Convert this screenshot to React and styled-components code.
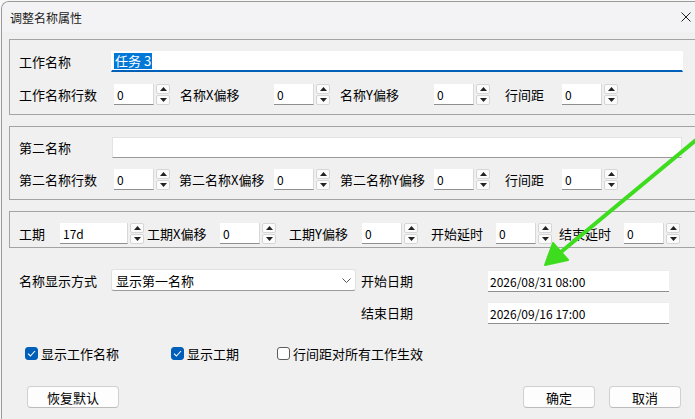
import React from 'react'
import styled, { createGlobalStyle } from 'styled-components'

const GlobalStyle = createGlobalStyle`
  html, body {
    margin: 0;
    padding: 0;
    background: #f7f7f7;
  }
  body {
    font-family: "Noto Sans CJK SC", "Noto Sans", sans-serif;
    color: #000;
  }
`

const Screen = styled.div`
  position: relative;
  width: 695px;
  height: 419px;
  overflow: hidden;
  padding-top: 1px;
  box-sizing: border-box;
`

const Window = styled.div`
  width: 720px;
  height: 440px;
  margin-left: 1px;
  border-left: 1px solid #9a9a9a;
  border-top: 1px solid #9a9a9a;
  border-top-left-radius: 8px;
  overflow: hidden;
  background: #f0f0f0;
`

const TitleBar = styled.div`
  height: 30px;
  display: flex;
  align-items: center;
  justify-content: space-between;
  padding: 0 0 0 8px;
  width: 686px;
  background: #f3f3f5;
  font-size: 12px;
  color: #1b1b1b;
`

const CloseBtn = styled.div`
  width: 20px;
  height: 20px;
  display: flex;
  align-items: center;
  justify-content: center;
`

const Body = styled.div`
  padding: 7px 0 0 7px;
  display: flex;
  flex-direction: column;
`

const Group = styled.div`
  width: 682px;
  border: 1px solid #a3a3a3;
  padding: ${p => p.$pad};
  display: flex;
  flex-direction: column;
  gap: ${p => p.$gap || 0}px;
  margin-bottom: 11px;
`

const Row = styled.div`
  display: flex;
  align-items: center;
  height: 21px;
`

const Label = styled.span`
  flex-shrink: 0;
  width: ${p => p.$w}px;
  padding-left: ${p => p.$pl || 0}px;
  box-sizing: border-box;
  font-size: 13px;
  white-space: nowrap;
  line-height: 21px;
`

const NameInput = styled.div`
  width: ${p => p.$w}px;
  height: 21px;
  box-sizing: border-box;
  background: #fff;
  border: 1px solid ${p => (p.$focused ? '#fff' : '#e3e3e3')};
  border-bottom: ${p => (p.$focused ? '2px solid #005fb8' : '1px solid #9a9a9a')};
  padding-left: 2px;
  font-size: 13px;
  line-height: 18px;
  display: flex;
  align-items: center;
`

const Selected = styled.span`
  background: #0078d7;
  color: #fff;
  padding: 0 1px;
  line-height: 16px;
`

const SpinWrap = styled.div`
  display: flex;
  align-items: center;
  flex-shrink: 0;
`

const SpinInput = styled.div`
  width: ${p => p.$w}px;
  height: 21px;
  box-sizing: border-box;
  background: #fff;
  border-right: 1px solid #d8d8d8;
  border-bottom: 1px solid #8f8f8f;
  padding-left: 3px;
  font-size: 12px;
  line-height: 21px;
`

const SpinButtons = styled.div`
  margin-left: 2px;
  width: 14px;
  height: 21px;
  display: flex;
  flex-direction: column;
  justify-content: space-between;
`

const SpinBtn = styled.div`
  height: 10px;
  box-sizing: border-box;
  border: 1px solid #d6d6d6;
  border-radius: 2px;
  background: #fbfbfb;
  display: flex;
  align-items: center;
  justify-content: center;
`

const Bottom = styled.div`
  width: 662px;
  margin: 10px 0 0 17px;
  display: flex;
  flex-direction: column;
`

const FormGrid = styled.div`
  display: grid;
  grid-template-columns: 92px 245px 132px 181px;
  grid-template-rows: 22px 22px;
  row-gap: 10px;
  align-items: center;
`

const Combo = styled.div`
  height: 22px;
  box-sizing: border-box;
  background: #fff;
  border: 1px solid #e1e1e1;
  border-bottom-color: #9a9a9a;
  border-radius: 3px;
  padding: 0 4px;
  display: flex;
  align-items: center;
  justify-content: space-between;
  font-size: 13px;
`

const DateBox = styled.div`
  height: 22px;
  box-sizing: border-box;
  background: #fff;
  border-top: 1px solid #ececec;
  border-bottom: 1px solid #8f8f8f;
  padding-left: 2px;
  font-size: 12px;
  line-height: 21px;
  margin-top: 1px;
`

const CheckRow = styled.div`
  display: flex;
  align-items: center;
  margin: 22px 0 0 6px;
  height: 16px;
`

const CheckItem = styled.label`
  display: flex;
  align-items: center;
  gap: 3px;
  width: ${p => (p.$w ? `${p.$w}px` : 'auto')};
  font-size: 13px;
  white-space: nowrap;
`

const Box = styled.span`
  width: 13px;
  height: 13px;
  box-sizing: border-box;
  border-radius: 3px;
  background: ${p => (p.$checked ? '#005fb8' : '#fff')};
  border: 1px solid ${p => (p.$checked ? '#005fb8' : '#5c5c5c')};
  display: flex;
  align-items: center;
  justify-content: center;
`

const ButtonRow = styled.div`
  display: flex;
  justify-content: space-between;
  margin: 25px 0 0 8px;
`

const ButtonGroup = styled.div`
  display: flex;
  gap: 14px;
`

const Button = styled.div`
  width: ${p => p.$w}px;
  height: 22px;
  box-sizing: border-box;
  border: 1px solid #d0d0d0;
  border-bottom-color: #bcbcbc;
  border-radius: 4px;
  background: #fdfdfd;
  font-size: 13px;
  display: flex;
  align-items: center;
  justify-content: center;
`

const Overlay = styled.svg`
  position: absolute;
  left: 0;
  top: 0;
  pointer-events: none;
`

const Tri = ({ down }) => (
  <svg width="7" height="4" viewBox="0 0 7 4">
    <path d={down ? 'M0 0H7L3.5 4Z' : 'M0 4H7L3.5 0Z'} fill="#222" />
  </svg>
)

const Spin = ({ value, w = 40 }) => (
  <SpinWrap>
    <SpinInput $w={w}>{value}</SpinInput>
    <SpinButtons>
      <SpinBtn><Tri /></SpinBtn>
      <SpinBtn><Tri down /></SpinBtn>
    </SpinButtons>
  </SpinWrap>
)

const SpinRow = ({ fields }) => (
  <Row>
    {fields.map(f => (
      <React.Fragment key={f.label}>
        <Label $w={f.w} $pl={f.pl}>{f.label}</Label>
        <Spin value={f.value} w={f.iw} />
      </React.Fragment>
    ))}
  </Row>
)

const Check = ({ checked }) => (
  <Box $checked={checked}>
    {checked && (
      <svg width="9" height="7" viewBox="0 0 9 7">
        <path d="M1 3.6L3.4 6L8 1" fill="none" stroke="#fff" strokeWidth="1.1" />
      </svg>
    )}
  </Box>
)

const firstRow = [
  { label: '工作名称行数', w: 95, value: '0' },
  { label: '名称X偏移', w: 104, pl: 10, value: '0' },
  { label: '名称Y偏移', w: 104, pl: 10, value: '0' },
  { label: '行间距', w: 72, pl: 15, value: '0' },
]

const secondRow = [
  { label: '第二名称行数', w: 95, value: '0' },
  { label: '第二名称X偏移', w: 104, pl: 9, value: '0' },
  { label: '第二名称Y偏移', w: 104, pl: 10, value: '0' },
  { label: '行间距', w: 72, pl: 15, value: '0' },
]

const durationRow = [
  { label: '工期', w: 41, value: '17d', iw: 68 },
  { label: '工期X偏移', w: 76, pl: 3, value: '0' },
  { label: '工期Y偏移', w: 86, pl: 13, value: '0' },
  { label: '开始延时', w: 78, pl: 13, value: '0' },
  { label: '结束延时', w: 72, pl: 7, value: '0' },
]

export default function App() {
  return (
    <Screen>
      <GlobalStyle />
      <Window>
        <TitleBar>
          <span>调整名称属性</span>
          <CloseBtn>
            <svg width="10" height="10" viewBox="0 0 10 10">
              <path d="M0.5 0.5L9.5 9.5M9.5 0.5L0.5 9.5" stroke="#222" strokeWidth="1" />
            </svg>
          </CloseBtn>
        </TitleBar>
        <Body>
          <Group $pad="11px 0 9px 9px" $gap={12}>
            <Row>
              <Label $w={92}>工作名称</Label>
              <NameInput $w={572} $focused>
                <Selected>任务 3</Selected>
              </NameInput>
            </Row>
            <SpinRow fields={firstRow} />
          </Group>
          <Group $pad="10px 0 9px 9px" $gap={11}>
            <Row>
              <Label $w={93}>第二名称</Label>
              <NameInput $w={570} />
            </Row>
            <SpinRow fields={secondRow} />
          </Group>
          <Group $pad="11px 0 3px 9px">
            <SpinRow fields={durationRow} />
          </Group>
        </Body>
        <Bottom>
          <FormGrid>
            <Label $w={92}>名称显示方式</Label>
            <Combo>
              <span>显示第一名称</span>
              <svg width="9" height="5" viewBox="0 0 9 5">
                <path d="M0.5 0.5L4.5 4.5L8.5 0.5" fill="none" stroke="#555" strokeWidth="1" />
              </svg>
            </Combo>
            <Label $w={132} $pl={5}>开始日期</Label>
            <DateBox>2026/08/31 08:00</DateBox>
            <Label $w={132} $pl={5} style={{ gridColumn: 3 }}>结束日期</Label>
            <DateBox>2026/09/16 17:00</DateBox>
          </FormGrid>
          <CheckRow>
            <CheckItem $w={146}><Check checked />显示工作名称</CheckItem>
            <CheckItem $w={106}><Check checked />显示工期</CheckItem>
            <CheckItem><Check />行间距对所有工作生效</CheckItem>
          </CheckRow>
          <ButtonRow>
            <Button $w={92}>恢复默认</Button>
            <ButtonGroup>
              <Button $w={72}>确定</Button>
              <Button $w={72}>取消</Button>
            </ButtonGroup>
          </ButtonRow>
        </Bottom>
      </Window>
      <Overlay width="695" height="419" viewBox="0 0 695 419">
        <line x1="702" y1="135" x2="561" y2="252" stroke="#3ddc1e" strokeWidth="4" strokeLinecap="round" />
        <path d="M545 265L553 243L568 260Z" fill="#3ddc1e" stroke="#3ddc1e" strokeWidth="2" strokeLinejoin="round" />
      </Overlay>
    </Screen>
  )
}
